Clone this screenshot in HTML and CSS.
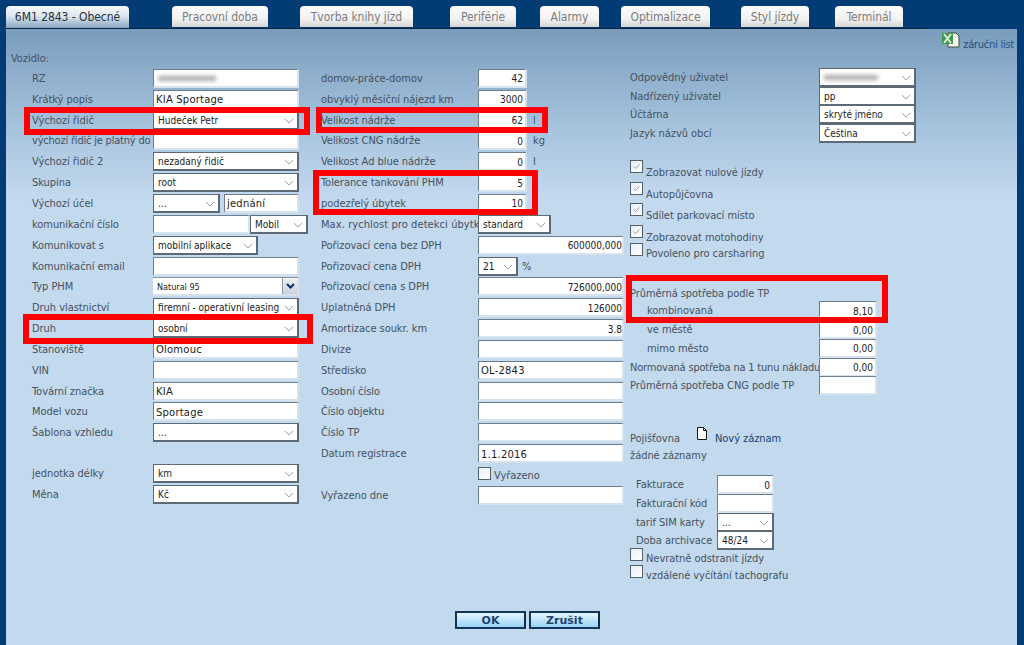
FILE: index.html
```html
<!DOCTYPE html>
<html lang="cs">
<head>
<meta charset="utf-8">
<title>Vozidlo</title>
<link rel="stylesheet" href="styles.css">
</head>
<body>
<nav class="tabs">
  <a class="tab active t1">6M1 2843 - Obecné</a>
  <a class="tab t2">Pracovní doba</a>
  <a class="tab t3">Tvorba knihy jízd</a>
  <a class="tab t4">Periférie</a>
  <a class="tab t5">Alarmy</a>
  <a class="tab t6">Optimalizace</a>
  <a class="tab t7">Styl jízdy</a>
  <a class="tab t8">Terminál</a>
</nav>
<main class="panel">
  <div class="toolbar">
    <svg class="xls" width="18" height="16" viewBox="0 0 18 16"><path d="M6 1h8l3 3v11H6z" fill="#f4f7f2" stroke="#3c4a3c"/><path d="M0 1h11v11H0z" fill="#3f9a4d"/><path d="M2 2l7 9M9 2l-7 9" stroke="#dff2dc" stroke-width="2"/></svg>
    <a class="link">záruční list</a>
  </div>
  <div class="columns">
    <section class="col col1">
      <div class="heading">Vozidlo:</div>
      <div class="row"><label>RZ</label><div class="field w146 blurred"><i class="smear s1"></i></div></div>
      <div class="row"><label>Krátký popis</label><input class="w146" value="KIA Sportage"></div>
      <div class="row"><label>Výchozí řidič</label><div class="sel w146"><span>Hudeček Petr</span><svg class="chev" viewBox="0 0 12 7"><path d="M1 1l5 5 5-5" fill="none" stroke="#8a8a8a"/></svg></div></div>
      <div class="row"><label class="snug">výchozí řidič je platný do</label><input class="w146"></div>
      <div class="row"><label>Výchozí řidič 2</label><div class="sel w146"><span>nezadaný řidič</span><svg class="chev" viewBox="0 0 12 7"><path d="M1 1l5 5 5-5" fill="none" stroke="#8a8a8a"/></svg></div></div>
      <div class="row"><label>Skupina</label><div class="sel w146"><span>root</span><svg class="chev" viewBox="0 0 12 7"><path d="M1 1l5 5 5-5" fill="none" stroke="#8a8a8a"/></svg></div></div>
      <div class="row"><label>Výchozí účel</label><div class="sel w67"><span>...</span><svg class="chev" viewBox="0 0 12 7"><path d="M1 1l5 5 5-5" fill="none" stroke="#8a8a8a"/></svg></div><input class="w75 gap4" value="jednání"></div>
      <div class="row"><label>komunikační číslo</label><input class="w97"><div class="sel w58"><span>Mobil</span><svg class="chev" viewBox="0 0 12 7"><path d="M1 1l5 5 5-5" fill="none" stroke="#8a8a8a"/></svg></div></div>
      <div class="row"><label>Komunikovat s</label><div class="sel w105"><span>mobilní aplikace</span><svg class="chev" viewBox="0 0 12 7"><path d="M1 1l5 5 5-5" fill="none" stroke="#8a8a8a"/></svg></div></div>
      <div class="row"><label>Komunikační email</label><input class="w146"></div>
      <div class="row"><label>Typ PHM</label><div class="combo w146"><span>Natural 95</span><b class="combo-btn"><svg width="9" height="6" viewBox="0 0 9 6"><path d="M1 1l3.5 3.5L8 1" fill="none" stroke="#0a2f6b" stroke-width="2"/></svg></b></div></div>
      <div class="row"><label>Druh vlastnictví</label><div class="sel w146"><span>firemní - operativní leasing</span><svg class="chev" viewBox="0 0 12 7"><path d="M1 1l5 5 5-5" fill="none" stroke="#8a8a8a"/></svg></div></div>
      <div class="row"><label>Druh</label><div class="sel w146"><span>osobní</span><svg class="chev" viewBox="0 0 12 7"><path d="M1 1l5 5 5-5" fill="none" stroke="#8a8a8a"/></svg></div></div>
      <div class="row"><label>Stanoviště</label><input class="w146" value="Olomouc"></div>
      <div class="row"><label>VIN</label><input class="w146"></div>
      <div class="row"><label>Tovární značka</label><input class="w146" value="KIA"></div>
      <div class="row"><label>Model vozu</label><input class="w146" value="Sportage"></div>
      <div class="row"><label>Šablona vzhledu</label><div class="sel w146"><span>...</span><svg class="chev" viewBox="0 0 12 7"><path d="M1 1l5 5 5-5" fill="none" stroke="#8a8a8a"/></svg></div></div>
      <div class="row spacer"></div>
      <div class="row"><label>jednotka délky</label><div class="sel w146"><span>km</span><svg class="chev" viewBox="0 0 12 7"><path d="M1 1l5 5 5-5" fill="none" stroke="#8a8a8a"/></svg></div></div>
      <div class="row"><label>Měna</label><div class="sel w146"><span>Kč</span><svg class="chev" viewBox="0 0 12 7"><path d="M1 1l5 5 5-5" fill="none" stroke="#8a8a8a"/></svg></div></div>
    </section>

    <section class="col col2">
      <div class="row"><label>domov-práce-domov</label><input class="w49 num" value="42"></div>
      <div class="row"><label>obvyklý měsíční nájezd km</label><input class="w49 num" value="3000"></div>
      <div class="row"><label>Velikost nádrže</label><input class="w49 num" value="62"><span class="unit">l</span></div>
      <div class="row"><label>Velikost CNG nádrže</label><input class="w49 num" value="0"><span class="unit">kg</span></div>
      <div class="row"><label>Velikost Ad blue nádrže</label><input class="w49 num" value="0"><span class="unit">l</span></div>
      <div class="row"><label>Tolerance tankování PHM</label><input class="w49 num" value="5"></div>
      <div class="row"><label>podezřelý úbytek</label><input class="w49 num" value="10"></div>
      <div class="row"><label class="wide">Max. rychlost pro detekci úbytku</label><div class="sel w73"><span>standard</span><svg class="chev" viewBox="0 0 12 7"><path d="M1 1l5 5 5-5" fill="none" stroke="#8a8a8a"/></svg></div></div>
      <div class="row"><label>Pořizovací cena bez DPH</label><input class="w146 num" value="600000,000"></div>
      <div class="row"><label>Pořizovací cena DPH</label><div class="sel w40"><span>21</span><svg class="chev" viewBox="0 0 12 7"><path d="M1 1l5 5 5-5" fill="none" stroke="#8a8a8a"/></svg></div><span class="unit pct">%</span></div>
      <div class="row"><label>Pořizovací cena s DPH</label><input class="w146 num" value="726000,000"></div>
      <div class="row"><label>Uplatněná DPH</label><input class="w146 num" value="126000"></div>
      <div class="row"><label>Amortizace soukr. km</label><input class="w146 num" value="3.8"></div>
      <div class="row"><label>Divize</label><input class="w146"></div>
      <div class="row"><label>Středisko</label><input class="w146" value="OL-2843"></div>
      <div class="row"><label>Osobní číslo</label><input class="w146"></div>
      <div class="row"><label>Číslo objektu</label><input class="w146"></div>
      <div class="row"><label>Číslo TP</label><input class="w146"></div>
      <div class="row"><label>Datum registrace</label><input class="w146" value="1.1.2016"></div>
      <div class="row"><label></label><span class="check retired"><i class="box"></i><span>Vyřazeno</span></span></div>
      <div class="row"><label>Vyřazeno dne</label><input class="w146"></div>
    </section>

    <section class="col col3">
      <div class="row tight"><label>Odpovědný uživatel</label><div class="sel w97 blurred"><i class="smear s2"></i><svg class="chev" viewBox="0 0 12 7"><path d="M1 1l5 5 5-5" fill="none" stroke="#8a8a8a"/></svg></div></div>
      <div class="row tight"><label>Nadřízený uživatel</label><div class="sel w97"><span>pp</span><svg class="chev" viewBox="0 0 12 7"><path d="M1 1l5 5 5-5" fill="none" stroke="#8a8a8a"/></svg></div></div>
      <div class="row tight"><label>Účtárna</label><div class="sel w97"><span>skryté jméno</span><svg class="chev" viewBox="0 0 12 7"><path d="M1 1l5 5 5-5" fill="none" stroke="#8a8a8a"/></svg></div></div>
      <div class="row tight"><label>Jazyk názvů obcí</label><div class="sel w97"><span>Čeština</span><svg class="chev" viewBox="0 0 12 7"><path d="M1 1l5 5 5-5" fill="none" stroke="#8a8a8a"/></svg></div></div>

      <div class="checks">
        <span class="check on"><i class="box"><svg viewBox="0 0 13 13"><path d="M3 6.5l2.5 2.5L10 4" fill="none" stroke="#8d8d8d"/></svg></i><span>Zobrazovat nulové jízdy</span></span>
        <span class="check on"><i class="box"><svg viewBox="0 0 13 13"><path d="M3 6.5l2.5 2.5L10 4" fill="none" stroke="#8d8d8d"/></svg></i><span>Autopůjčovna</span></span>
        <span class="check on"><i class="box"><svg viewBox="0 0 13 13"><path d="M3 6.5l2.5 2.5L10 4" fill="none" stroke="#8d8d8d"/></svg></i><span>Sdílet parkovací místo</span></span>
        <span class="check on short"><i class="box"><svg viewBox="0 0 13 13"><path d="M3 6.5l2.5 2.5L10 4" fill="none" stroke="#8d8d8d"/></svg></i><span>Zobrazovat motohodiny</span></span>
        <span class="check flat"><i class="box"></i><span>Povoleno pro carsharing</span></span>
      </div>

      <div class="consumption-title">Průměrná spotřeba podle TP</div>
      <div class="row tight indent"><label>kombinovaná</label><input class="w58 num" value="8,10"></div>
      <div class="row tight indent"><label>ve městě</label><input class="w58 num" value="0,00"></div>
      <div class="row tight indent"><label>mimo město</label><input class="w58 num" value="0,00"></div>
      <div class="row tight"><label class="snug">Normovaná spotřeba na 1 tunu nákladu</label><input class="w58 num" value="0,00"></div>
      <div class="row tight"><label>Průměrná spotřeba CNG podle TP</label><input class="w58"></div>

      <div class="insurance">
        <span class="ins-label">Pojišťovna</span>
        <svg class="doc" width="12" height="13" viewBox="0 0 12 13"><path d="M1.5.5h6l3 3v9h-9z" fill="#fff" stroke="#1a1a1a"/><path d="M7.5.5v3h3" fill="none" stroke="#1a1a1a"/></svg>
        <a class="new-link">Nový záznam</a>
      </div>
      <div class="no-records">žádné záznamy</div>

      <div class="billing">
        <div class="row tight"><label>Fakturace</label><input class="w57 num" value="0"></div>
        <div class="row tight"><label>Fakturační kód</label><input class="w57"></div>
        <div class="row tight"><label>tarif SIM karty</label><div class="sel w57"><span>...</span><svg class="chev" viewBox="0 0 12 7"><path d="M1 1l5 5 5-5" fill="none" stroke="#8a8a8a"/></svg></div></div>
        <div class="row tight"><label>Doba archivace</label><div class="sel w57"><span>48/24</span><svg class="chev" viewBox="0 0 12 7"><path d="M1 1l5 5 5-5" fill="none" stroke="#8a8a8a"/></svg></div></div>
      </div>
      <span class="check flat low first"><i class="box"></i><span>Nevratně odstranit jízdy</span></span>
      <span class="check flat low"><i class="box"></i><span>vzdálené vyčítání tachografu</span></span>
    </section>
  </div>
  <footer class="actions">
    <button class="btn">OK</button>
    <button class="btn">Zrušit</button>
  </footer>
</main>
<div class="mark m1"></div>
<div class="mark m2"></div>
<div class="mark m3"></div>
<div class="mark m4"></div>
<div class="mark m5"></div>
</body>
</html>
```

FILE: styles.css
```css
* { box-sizing: border-box; }
html, body { margin: 0; height: 100%; overflow: hidden; }
body {
  position: relative;
  background: #033b74;
  font-family: "DejaVu Sans", sans-serif;
  font-stretch: condensed;
  font-size: 11px;
  letter-spacing: -0.05px;
  color: #45525f;
  display: flex;
  flex-direction: column;
}

/* tabs */
.tabs { display: flex; height: 28px; padding-top: 6px; padding-left: 6px; flex: none; }
.tab {
  height: 21px;
  border-radius: 4px 4px 0 0;
  background: linear-gradient(#fbfbfb 0, #f3f3f3 60%, #d5d5d5 100%);
  color: #7c7c7c;
  font-size: 12px;
  line-height: 23px;
  text-align: center;
}
.tab.active {
  height: 22px;
  color: #26323d;
  background: linear-gradient(#f5f8fa 0, #dfe8ef 45%, #86a5c2 100%);
}
.t1 { width: 123px; }
.t2 { width: 96px; margin-left: 43px; }
.t3 { width: 113px; margin-left: 32px; }
.t4 { width: 66px; margin-left: 37px; }
.t5 { width: 59px; margin-left: 24px; }
.t6 { width: 89px; margin-left: 22px; }
.t7 { width: 68px; margin-left: 31px; }
.t8 { width: 68px; margin-left: 26px; }

/* panel */
.panel {
  flex: 1;
  margin: 0 7px 0 6px;
  border-top: 1px solid #0a2336;
  border-image: linear-gradient(90deg, #0a2336 91%, #033b74 91%) 1;
  background: linear-gradient(#7a9dbd 0, #a5c2dc 95px, #c3d9ee 170px);
}
.toolbar { height: 20px; display: flex; justify-content: flex-end; align-items: flex-start; padding: 3px 3px 0 0; gap: 3px; }
.xls { flex: none; }
.link { color: #1f4f80; padding-top: 6px; letter-spacing: -0.25px; }

.columns { display: flex; height: 563px; }
.col { flex: none; display: flex; flex-direction: column; }
.col1 { width: 315px; padding-left: 5px; }
.col2 { width: 309px; padding-top: 19px; }
.col3 { width: 380px; padding-top: 19px; }

.heading { height: 19px; line-height: 20px; }
.row { display: flex; align-items: center; height: 20.85px; flex: none; }
.row.tight { height: 18.75px; }
.row.spacer { height: 20.25px; }
.row label { flex: none; white-space: nowrap; }
.col1 .row { padding-left: 21px; }
.col1 label { width: 121px; }
.col2 label { width: 157px; }
.col3 label { width: 189px; }
.col3 .billing label { width: 81px; }
.indent label { padding-left: 17px; }
.row label.snug { letter-spacing: -0.2px; }
.row label.wide { letter-spacing: 0.08px; }

/* controls */
input, .field {
  height: 19px;
  padding: 2px 2px 0;
  background: #fff;
  border: 0;
  border-top: 1px solid #6d7d8c;
  border-left: 1px solid #6d7d8c;
  border-right: 2px solid #d6e3ef;
  border-bottom: 2px solid #d6e3ef;
  outline: 0;
  font-family: "DejaVu Sans", sans-serif;
  font-size: 10px;
  letter-spacing: 0.2px;
  color: #1c1c1c;
  border-radius: 0;
  flex: none;
}
input.num { text-align: right; font-stretch: condensed; letter-spacing: 0; }
input.w146.num { padding-right: 0; }
.sel, .combo {
  position: relative;
  height: 19px;
  display: flex;
  align-items: center;
  padding: 1px 0 0 4px;
  background: #fff;
  border: 1px solid #5d6a76;
  border-right-width: 2px;
  border-bottom-width: 2px;
  font-family: "DejaVu Sans", sans-serif;
  font-stretch: condensed;
  letter-spacing: 0;
  font-size: 10px;
  color: #1c1c1c;
  white-space: nowrap;
  overflow: hidden;
  flex: none;
}
.chev { position: absolute; right: 3px; top: 6px; width: 10px; height: 6px; background: #fff; }
.combo { border: 0; border-top: 1px solid #8a97a3; border-right: 2px solid #d6e3ef; border-bottom: 2px solid #d6e3ef; font-size: 9px; }
.combo-btn { position: absolute; right: 0; top: 0; bottom: 0; width: 15px; background: linear-gradient(#f2f2f2, #c9d1d8); border-left: 1px solid #8a97a3; display: flex; align-items: center; justify-content: center; }
.w146 { width: 146px; }
.w105 { width: 105px; }
.w97 { width: 97px; }
.w75 { width: 75px; }
.w73 { width: 73px; }
.w67 { width: 67px; }
.w58 { width: 58px; }
.w57 { width: 57px; }
.w49 { width: 49px; }
.w40 { width: 40px; }
.gap4 { margin-left: 4px; }
.unit { margin-left: 6px; }
.unit.pct { margin-left: 4px; }
.blurred { padding-left: 4px; display: flex; align-items: center; }
.smear { display: block; height: 5px; background: #a9a9a9; filter: blur(2px); }
.s1 { width: 58px; }
.s2 { width: 54px; }

/* checkboxes */
.check { display: flex; align-items: flex-start; height: 21.5px; }
.check > span { padding: 6px 0 0 3px; line-height: 13px; }
.box { display: block; width: 13px; height: 13px; flex: none; background: linear-gradient(135deg, #e9f0f6, #fff); border: 1px solid #54606b; }
.box svg { display: block; width: 11px; height: 11px; }
.check.short { height: 18px; }
.check.flat { height: 17px; }
.check.flat > span { padding: 4px 0 0 3px; }
.checks { margin-top: 17px; display: flex; flex-direction: column; }
.retired { margin-top: -2px; height: 13px; }
.retired > span { padding: 2px 0 0 3px; }
.check.low { height: 17px; }
.check.low.first { margin-top: -2px; }
.check.low > span { padding: 4px 0 0 3px; }

.consumption-title { margin-top: 22px; height: 20px; line-height: 20px; padding-top: 2px; }
.insurance { margin-top: 31px; display: flex; align-items: flex-end; height: 20px; }
.ins-label { width: 66px; line-height: 14px; }
.doc { margin-bottom: 6px; flex: none; }
.new-link { margin-left: 7px; color: #173f73; line-height: 14px; }
.no-records { height: 17px; line-height: 17px; margin-top: 1px; }
.billing { margin-top: 11px; padding-left: 6px; }

/* buttons */
.actions { display: flex; gap: 3px; padding: 0 0 0 449px; margin-top: -1px; }
.btn {
  width: 71px;
  height: 18px;
  padding: 0;
  border: 2px solid #10375a;
  border-right-color: #0c2c48;
  background: linear-gradient(#e6f5ff, #98d3f6);
  color: #1c4470;
  font-family: "DejaVu Sans", sans-serif;
  font-weight: bold;
  font-size: 11px;
}

/* red highlights drawn over the form */
.mark { position: absolute; border: 6px solid #f00; pointer-events: none; }
.m1 { left: 24px; top: 107px; width: 286px; height: 28px; }
.m2 { left: 316px; top: 107px; width: 232px; height: 26px; }
.m3 { left: 313px; top: 170px; width: 225px; height: 45px; }
.m4 { left: 23px; top: 314px; width: 290px; height: 30px; }
.m5 { left: 626px; top: 275px; width: 262px; height: 48px; }
```
